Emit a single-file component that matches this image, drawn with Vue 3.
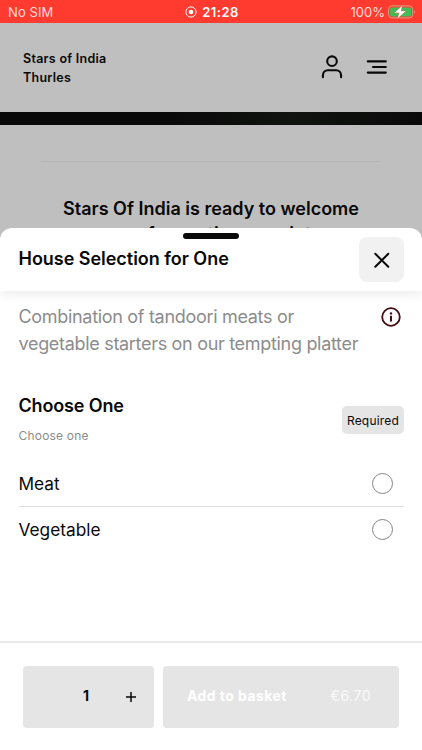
<script setup>
import { ref } from 'vue';

const quantity = ref(1);
const selected = ref('');
const options = ['Meat', 'Vegetable'];
</script>

<template>
    <div class="screen">
        <div class="status-bar">
            <span class="carrier">No SIM</span>
            <div class="clock">
                <svg width="12" height="12" viewBox="0 0 12 12">
                    <circle cx="6" cy="6" r="5.1" fill="none" stroke="currentColor" />
                    <circle cx="6" cy="6" r="2.3" fill="currentColor" />
                </svg>
                <span>21:28</span>
            </div>
            <div class="battery">
                <span>100%</span>
                <svg width="28" height="14" viewBox="0 0 28 14">
                    <rect x="0.6" y="0.9" width="24" height="12" rx="3.3" fill="none" stroke="#d6a184" />
                    <rect x="2.1" y="2.4" width="21" height="9" rx="2" fill="#43bd59" />
                    <path d="M26 5q2 2 0 4z" fill="#e98c80" />
                    <path d="M14.5 0.2 6.3 7.9h4.8l-1.8 5.9 8.7-7.8h-4.9z" fill="#fff" stroke="#e5523f" stroke-width="0.4" />
                </svg>
            </div>
        </div>

        <header class="site-header">
            <div class="brand">Stars of India<br>Thurles</div>
            <div class="nav-icons">
                <svg width="22" height="24" viewBox="0 0 22 24" fill="none" stroke="currentColor" stroke-width="2.1" stroke-linecap="round">
                    <circle cx="11" cy="6.2" r="4.8" />
                    <path d="M1.9 22.3v-1.6c0-3.2 2-5.4 5-5.4h8.2c3 0 5 2.2 5 5.4v1.6" />
                </svg>
                <svg width="22" height="24" viewBox="0 0 22 24" fill="none" stroke="currentColor" stroke-width="2.1" stroke-linecap="round">
                    <path d="M1.8 6.4h18M7 12H19.8M1.8 17.6h18" />
                </svg>
            </div>
        </header>

        <div class="banner"></div>
        <section class="welcome">
            <hr>
            <h1>Stars Of India is ready to welcome<br>you for seating appoint</h1>
        </section>

        <div class="sheet">
            <span class="handle"></span>
            <div class="sheet-header">
                <h2>House Selection for One</h2>
                <button class="close" aria-label="Close">
                    <svg width="18" height="18" viewBox="0 0 18 18" fill="none" stroke="currentColor" stroke-width="2" stroke-linecap="round">
                        <path d="m2.3 2.8 13 13m0-13-13 13" />
                    </svg>
                </button>
            </div>

            <div class="sheet-body">
                <div class="description">
                    <p>Combination of tandoori meats or<br>vegetable starters on our tempting platter</p>
                    <svg width="20" height="20" viewBox="0 0 20 20">
                        <circle cx="10" cy="10" r="8.8" fill="none" stroke="#430c12" stroke-width="1.8" />
                        <circle cx="10" cy="6.4" r="1.2" fill="#430c12" />
                        <path d="M10 8.7v5.9" stroke="#430c12" stroke-width="2" />
                    </svg>
                </div>

                <div class="group-header">
                    <div>
                        <h3>Choose One</h3>
                        <small>Choose one</small>
                    </div>
                    <span class="required">Required</span>
                </div>

                <label v-for="option in options" :key="option" class="option">
                    <span>{{ option }}</span>
                    <input type="radio" v-model="selected" name="choice" :value="option">
                </label>
            </div>

            <footer>
                <div class="quantity">
                    <span class="amount">{{ quantity }}</span>
                    <button aria-label="Increase" @click="quantity++">
                        <svg width="12" height="12" viewBox="0 0 12 12">
                            <path d="M6 1v10M1 6h10" stroke="currentColor" stroke-width="1.5" />
                        </svg>
                    </button>
                </div>
                <button class="basket" :disabled="!selected">
                    <span class="basket-label">Add to basket</span>
                    <span class="price">€6.70</span>
                </button>
            </footer>
        </div>
    </div>
</template>

<style>
body {
    margin: 0;
}
</style>

<style scoped>
.screen {
    position: relative;
    height: 750px;
    overflow: hidden;
    background: #bfbfbf;
    color: #090909;
    font-family: Inter, "Liberation Sans", sans-serif;
}

h1, h2, h3, p {
    margin: 0;
}

button {
    padding: 0;
    border: 0;
    color: inherit;
    font: inherit;
}

svg {
    display: block;
    flex: none;
}

.status-bar {
    display: grid;
    grid-template-columns: 1fr auto 1fr;
    align-items: center;
    box-sizing: border-box;
    height: 23px;
    padding: 1px 6px 0 8px;
    background: #ff3b30;
    color: #fff;
    font-size: 13px;
}

.carrier {
    color: #ffdeda;
    letter-spacing: 0.1px;
}

.clock, .battery {
    display: flex;
    align-items: center;
    gap: 5px;
}

.clock {
    font-weight: 600;
    letter-spacing: 0.5px;
}

.battery {
    justify-content: flex-end;
    gap: 3px;
    color: #ffdeda;
}

.site-header {
    display: flex;
    justify-content: space-between;
    box-sizing: border-box;
    height: 89px;
    padding: 25px 34px 0 23px;
}

.brand {
    padding-top: 0.5px;
    font-size: 12.5px;
    font-weight: 600;
    line-height: 19px;
    letter-spacing: 0.27px;
}

.nav-icons {
    display: flex;
    gap: 23px;
    padding-top: 7px;
}

.banner {
    height: 13px;
    background: linear-gradient(90deg, #090909 40%, #101310 70%, #090909);
}

.welcome hr {
    height: 1px;
    margin: 36px 42px 34px 41px;
    border: 0;
    background: #b5b5b5;
}

.welcome h1 {
    font-size: 18px;
    font-weight: 600;
    line-height: 25px;
    text-align: center;
}

.sheet {
    position: absolute;
    inset: 228px 0 0;
    display: flex;
    flex-direction: column;
    background: #fff;
    border-radius: 12px 12px 0 0;
}

.handle {
    position: absolute;
    top: 5px;
    left: 183px;
    width: 56px;
    height: 6px;
    border-radius: 3px;
    background: #090909;
}

.sheet-header {
    display: flex;
    justify-content: space-between;
    box-sizing: border-box;
    height: 63px;
    padding: 9px 18px 0 18.5px;
    box-shadow: 0 4px 10px rgba(0, 0, 0, 0.07);
    clip-path: inset(0 0 -20px 0);
}

.sheet-header h2 {
    padding-top: 10px;
    font-size: 18px;
    font-weight: 600;
    line-height: 24px;
    letter-spacing: -0.03px;
}

.close {
    display: grid;
    place-items: center;
    width: 45px;
    height: 45px;
    border-radius: 8px;
    background: #f1f1f1;
}

.sheet-body {
    flex: 1;
    padding: 12px 18px 0 18.5px;
}

.description {
    display: flex;
    justify-content: space-between;
    padding-right: 3px;
    color: #8c8c8c;
    font-size: 18px;
    line-height: 27px;
    letter-spacing: -0.31px;
}

.description p {
    white-space: nowrap;
}

.description svg {
    margin-top: 4px;
}

.group-header {
    display: flex;
    justify-content: space-between;
    margin-top: 33px;
    height: 71px;
}

.group-header h3 {
    padding-top: 3px;
    font-size: 18px;
    font-weight: 600;
    line-height: 26px;
    letter-spacing: -0.15px;
}

.group-header small {
    display: block;
    padding-top: 9px;
    color: #8c8c8c;
    font-size: 12px;
    line-height: 16px;
    letter-spacing: 0.2px;
}

.required {
    width: 62px;
    height: 28px;
    margin-top: 16px;
    border-radius: 5px;
    background: #e5e5e5;
    font-size: 12px;
    line-height: 29px;
    letter-spacing: 0.2px;
    text-align: center;
}

.option {
    display: flex;
    align-items: center;
    justify-content: space-between;
    height: 45px;
    padding-right: 11.5px;
    font-size: 17.3px;
}

.option + .option {
    border-top: 1px solid #e0e0e0;
}

.option input {
    appearance: none;
    box-sizing: border-box;
    width: 21px;
    height: 21px;
    margin: 0;
    border: 1px solid #858585;
    border-radius: 50%;
}

footer {
    display: flex;
    gap: 9px;
    box-sizing: border-box;
    height: 109px;
    padding: 22.5px 23px 0;
    border-top: 2px solid #e9e9e9;
}

.quantity, .basket {
    display: flex;
    align-items: center;
    height: 62px;
    border-radius: 4px;
    background: #e5e5e5;
}

.quantity {
    width: 131px;
}

.amount {
    width: 42px;
    padding: 0 0 3px 60px;
    font-size: 14px;
    font-weight: 700;
}

.quantity button {
    padding-top: 1px;
    background: none;
}

.basket {
    flex: 1;
    justify-content: space-between;
    box-sizing: border-box;
    padding: 0 28px 3px 24px;
    color: #fff;
    font-size: 14px;
}

.basket-label {
    font-weight: 700;
    letter-spacing: 0.43px;
}

.price {
    letter-spacing: 0.5px;
    opacity: 0.8;
}
</style>
